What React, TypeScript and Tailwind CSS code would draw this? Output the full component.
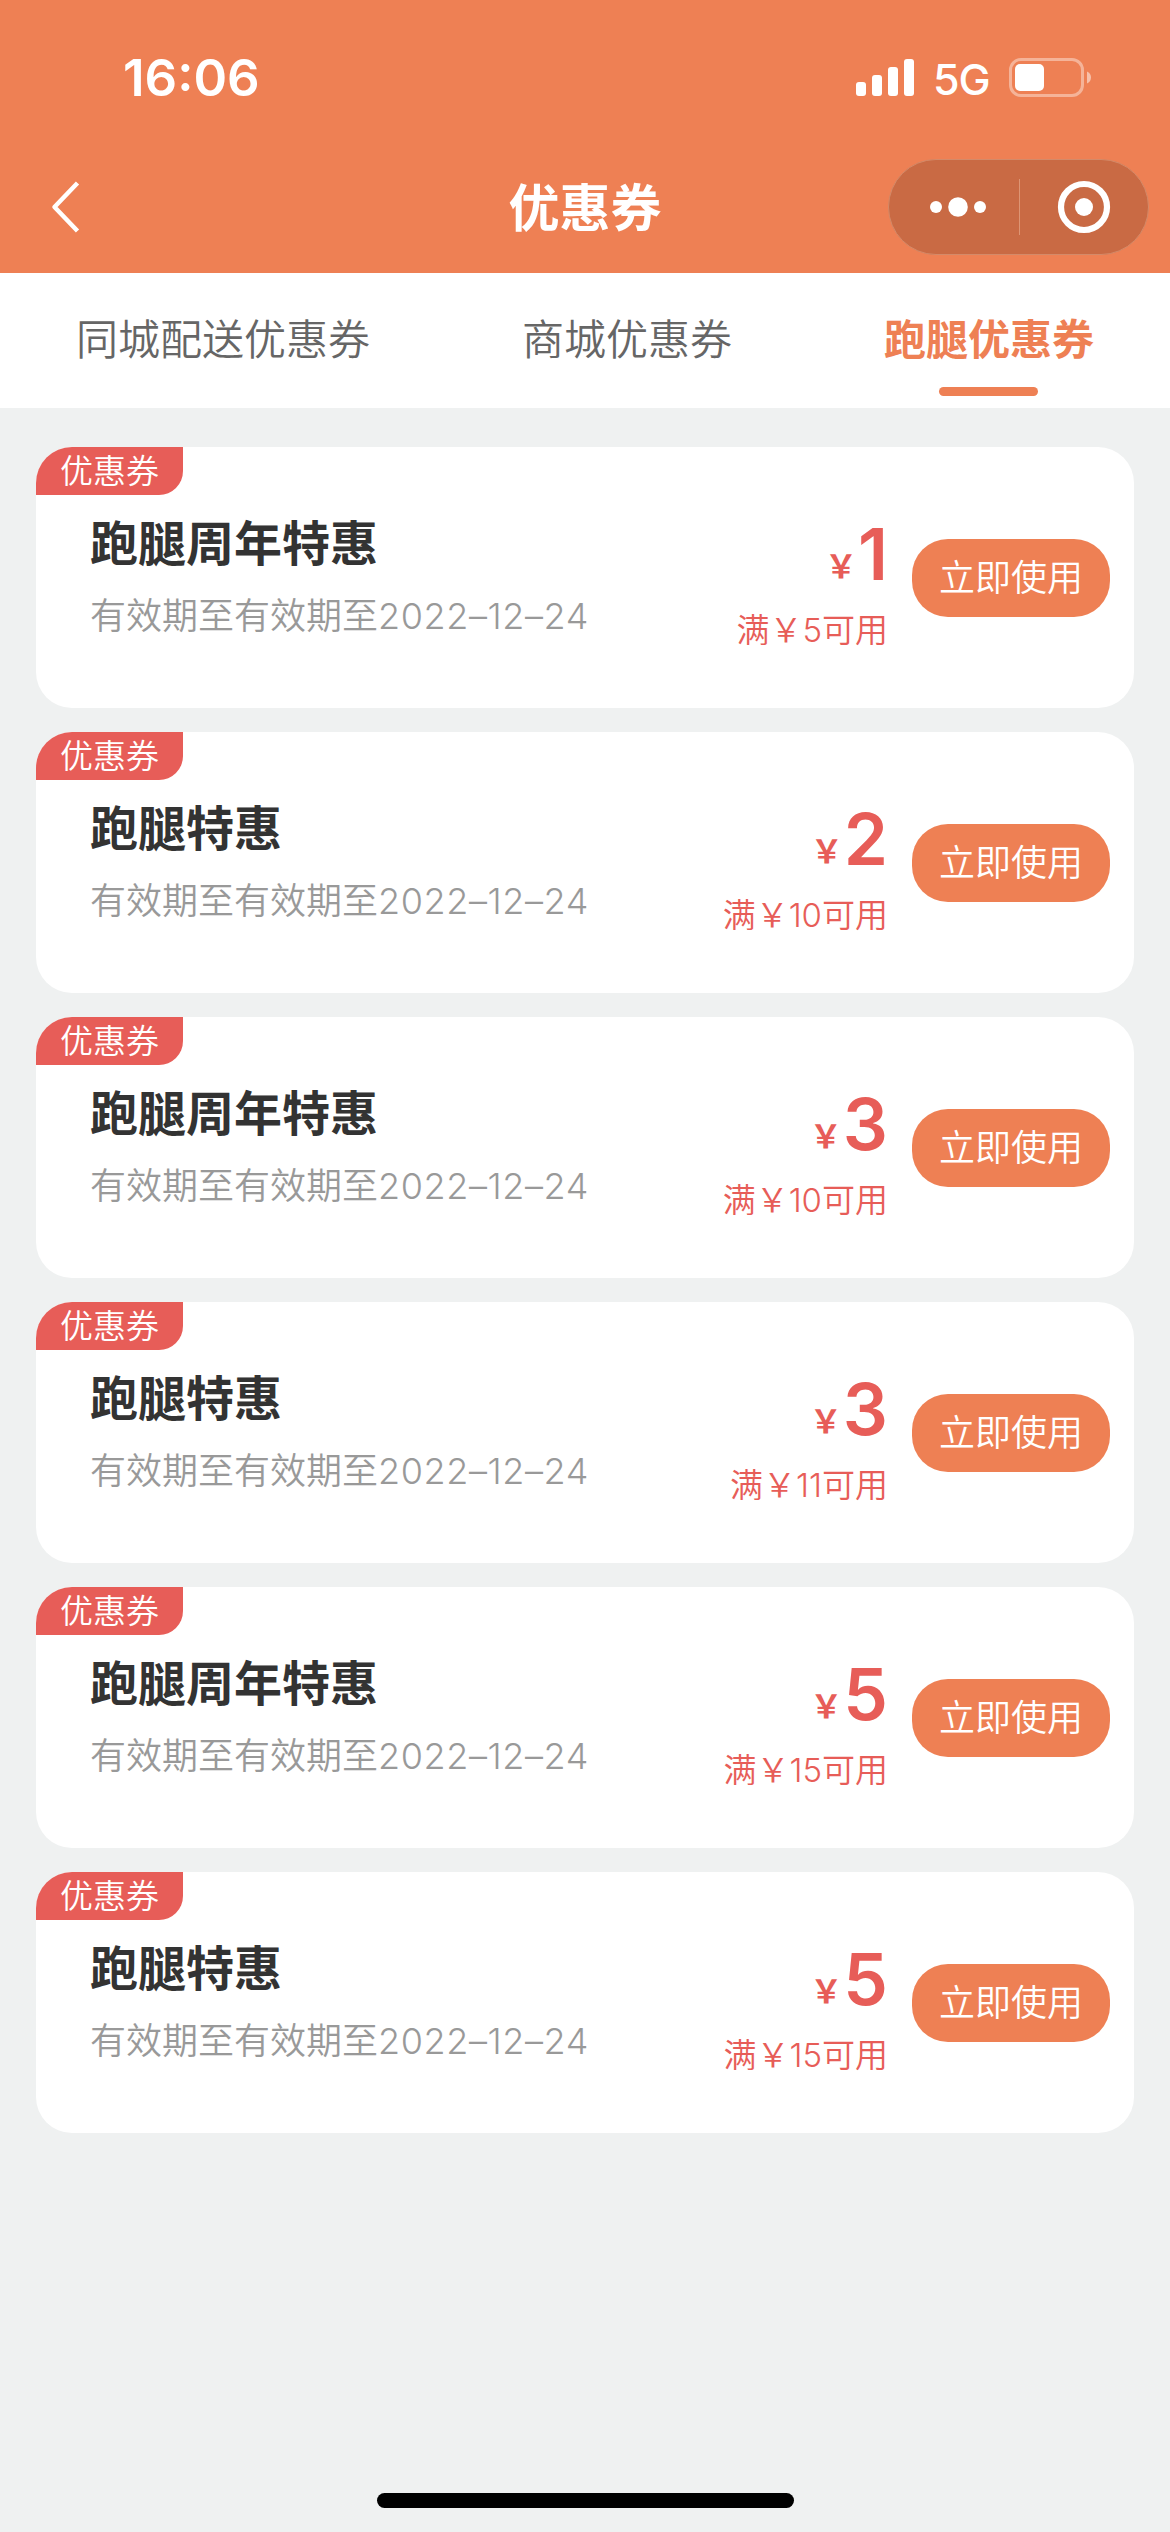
import { useState } from 'react'

type Coupon = {
  name: string
  amount: number
  minimum: number
  expires: string
}

const TABS = ['同城配送优惠券', '商城优惠券', '跑腿优惠券']

const COUPONS: Coupon[] = [
  { name: '跑腿周年特惠', amount: 1, minimum: 5, expires: '2022–12–24' },
  { name: '跑腿特惠', amount: 2, minimum: 10, expires: '2022–12–24' },
  { name: '跑腿周年特惠', amount: 3, minimum: 10, expires: '2022–12–24' },
  { name: '跑腿特惠', amount: 3, minimum: 11, expires: '2022–12–24' },
  { name: '跑腿周年特惠', amount: 5, minimum: 15, expires: '2022–12–24' },
  { name: '跑腿特惠', amount: 5, minimum: 15, expires: '2022–12–24' },
]

function StatusBar() {
  return (
    <div className="flex h-[159px] items-start justify-between pl-[123px] pr-[79px] pt-[58px]">
      <span className="text-[51px] font-semibold leading-[40px]">16:06</span>
      <div className="flex items-start">
        <svg width="58" height="39" viewBox="0 0 58 39" fill="currentColor">
          <rect x="0" y="24" width="10" height="14" rx="3" />
          <rect x="16" y="17" width="10" height="21" rx="3" />
          <rect x="32" y="9" width="10" height="29" rx="3" />
          <rect x="48" y="1" width="10" height="37" rx="3" />
        </svg>
        <span className="ml-[19px] w-[76px] text-[43px] font-medium leading-[42px] tracking-[-1px]">5G</span>
        <svg width="82" height="39" viewBox="0 0 82 39">
          <rect x="1.5" y="1.5" width="72" height="36" rx="10.5" fill="none" stroke="#fff" strokeOpacity="0.4" strokeWidth="3" />
          <rect x="6" y="6" width="29" height="27" rx="5" fill="#fff" />
          <path d="M78 13.500c2.400 1 4 3.300 4 6s-1.600 5-4 6z" fill="#fff" fillOpacity="0.5" />
        </svg>
      </div>
    </div>
  )
}

function NavBar() {
  return (
    <div className="grid h-24 grid-cols-[1fr_auto_1fr] items-center px-[21px]">
      <button className="ml-[30px] justify-self-start" aria-label="返回">
        <svg width="29" height="52" viewBox="0 0 29 52" fill="none" stroke="currentColor" strokeWidth="4.500" strokeLinejoin="round">
          <path d="M26.500 2 3.500 26l23 24" />
        </svg>
      </button>
      <h1 className="pt-[2px] text-[51px] font-bold leading-none">优惠券</h1>
      <div className="flex h-24 w-[261px] items-center justify-self-end rounded-full border border-[#d48a69] bg-[#c96a44]">
        <button className="flex w-[130px] justify-center pl-[7px]" aria-label="更多">
          <svg width="58" height="20" viewBox="0 0 58 20" fill="currentColor">
            <circle cx="7" cy="10" r="6" />
            <circle cx="29" cy="10" r="9.800" />
            <circle cx="51" cy="10" r="6" />
          </svg>
        </button>
        <div className="h-14 w-px bg-[#dd9574]" />
        <button className="flex flex-1 justify-center" aria-label="关闭">
          <svg width="54" height="54" viewBox="0 0 54 54">
            <circle cx="27" cy="27" r="23" fill="none" stroke="#fff" strokeWidth="6.200" />
            <circle cx="27" cy="27" r="9" fill="#fff" />
          </svg>
        </button>
      </div>
    </div>
  )
}

function CouponCard({ coupon }: { coupon: Coupon }) {
  return (
    <div className="h-[261px] overflow-hidden rounded-[36px] bg-white">
      <div className="flex h-full items-start">
        <div className="flex-1">
          <div className="h-12 w-[147px] rounded-br-3xl bg-[#e75d58] text-center text-[33px] font-[350] leading-[48px] text-white">
            优惠券
          </div>
          <div className="pl-[54px]">
            <h2 className="mt-[19px] text-[48px] font-bold leading-[60px] text-[#333]">{coupon.name}</h2>
            <p className="mt-[18px] text-[36px] font-[350] leading-[48px] text-[#999]">
              有效期至有效期至<span className="tracking-[0.6px]">{coupon.expires}</span>
            </p>
          </div>
        </div>
        <div className="pt-[62px] text-right text-[#e75d58]">
          <div className="h-[90px] text-[71px] font-semibold leading-[90px]">
            <span className="mr-px align-[2px] text-[32px] font-bold leading-none">￥</span>
            {coupon.amount}
          </div>
          <div className="mt-[7px] text-[33px] font-[350] leading-[48px]">
            满￥{coupon.minimum}可用
          </div>
        </div>
        <button className="ml-6 mr-6 mt-[92px] h-[78px] w-[198px] rounded-[36px] bg-[#ee8054] text-[36px] font-[350] leading-[78px] text-white">
          立即使用
        </button>
      </div>
    </div>
  )
}

export default function App() {
  const [active, setActive] = useState(2)

  return (
    <div className="flex h-[2532px] w-[1170px] flex-col overflow-hidden bg-[#eff1f1] font-[Inter,'Noto_Sans_CJK_SC',sans-serif]">
      {/* Header */}
      <header className="h-[273px] bg-[#ee8054] text-white">
        <StatusBar />
        <NavBar />
      </header>

      {/* Tabs */}
      <nav className="flex h-[135px] justify-around bg-white">
        {TABS.map((tab, index) => (
          <button
            key={tab}
            onClick={() => setActive(index)}
            className={
              index === active
                ? 'flex flex-col items-center pt-[37px] text-[42px] font-bold leading-[60px] text-[#ee8054]'
                : 'flex flex-col items-center pt-[37px] text-[42px] font-[350] leading-[60px] text-[#666]'
            }
          >
            {tab}
            {index === active && <span className="mt-[17px] h-[9px] w-[99px] rounded-full bg-[#ee8054]" />}
          </button>
        ))}
      </nav>

      {/* Coupon list */}
      <main className="flex flex-1 flex-col gap-6 px-9 pt-[39px]">
        {COUPONS.map((coupon, index) => (
          <CouponCard key={index} coupon={coupon} />
        ))}
      </main>

      {/* Home indicator */}
      <div className="mb-6 h-[15px] w-[417px] self-center rounded-full bg-black" />
    </div>
  )
}
